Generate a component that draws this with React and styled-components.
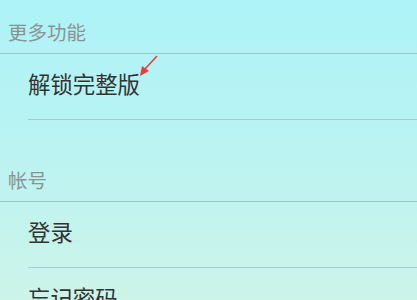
import React from "react";
import styled, { createGlobalStyle } from "styled-components";

const Global = createGlobalStyle`
  html, body { margin: 0; padding: 0; }
  body {
    width: 417px;
    height: 300px;
    overflow: hidden;
    font-family: "Noto Sans CJK SC", "Noto Sans", sans-serif;
  }
`;

const Page = styled.div`
  width: 417px;
  height: 300px;
  overflow: hidden;
  background: linear-gradient(180deg, #adf3f8 0%, #bcf3f1 55%, #cdf4e9 100%);
  display: flex;
  flex-direction: column;
`;

const Section = styled.section`
  display: flex;
  flex-direction: column;
  margin-top: ${(p) => p.$gap || 0}px;
`;

const Header = styled.div`
  height: 54px;
  box-sizing: border-box;
  padding: 0 0 9px 8px;
  display: flex;
  align-items: flex-end;
  font-size: 19.5px;
  line-height: 24px;
  color: #8c9292;
  border-bottom: 1px solid #9ec6c6;
`;

const Item = styled.div`
  position: relative;
  height: 66px;
  margin-left: 28px;
  box-sizing: border-box;
  display: flex;
  align-items: center;
  font-size: 22.4px;
  color: #333;
  border-bottom: 1px solid #a3cccb;
  padding-bottom: 8px;
`;

const Arrow = styled.svg`
  position: absolute;
  left: 111px;
  top: 1px;
  width: 19px;
  height: 22px;
  overflow: visible;
`;

export default function App() {
  return (
    <>
      <Global />
      <Page>
        <Section>
          <Header>更多功能</Header>
          <Item>
            解锁完整版
            <Arrow viewBox="0 0 19 22">
              <line x1="18" y1="1" x2="6" y2="14" stroke="#f03a3a" strokeWidth="1.6" />
              <polygon points="1,21 3,11 10,16" fill="#f03a3a" />
            </Arrow>
          </Item>
        </Section>
        <Section $gap={28}>
          <Header>帐号</Header>
          <Item>登录</Item>
          <Item>忘记密码</Item>
        </Section>
      </Page>
    </>
  );
}
